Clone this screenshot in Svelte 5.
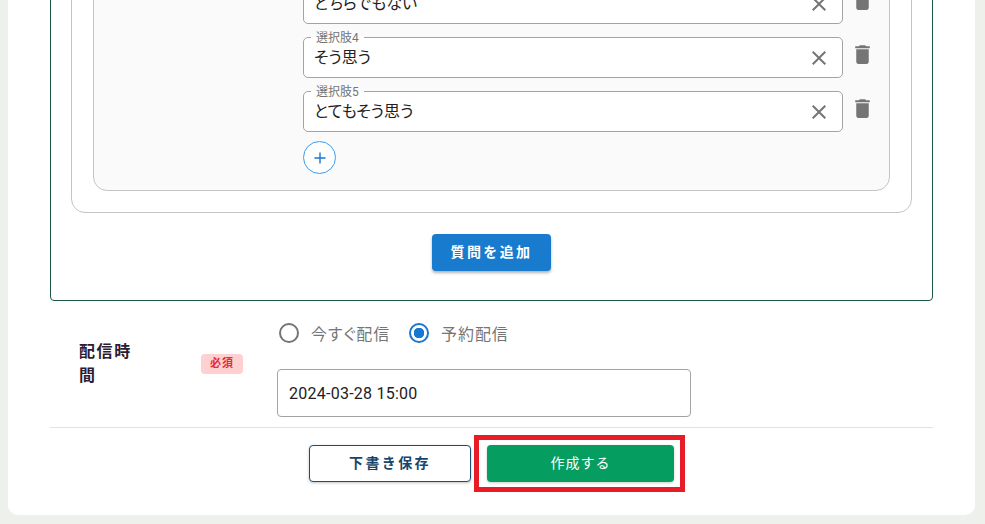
<script lang="ts">
  const choices = [
    { label: '選択肢3', value: 'どちらでもない' },
    { label: '選択肢4', value: 'そう思う' },
    { label: '選択肢5', value: 'とてもそう思う' }
  ];
  let timing = $state('reserve');
</script>

<div class="page">
  <main class="card">
    <section class="form-box">
      <div class="question">
        <div class="choices">
          {#each choices as c}
            <div class="choice-row">
              <fieldset class="field">
                <legend>{c.label}</legend>
                <input type="text" value={c.value} />
                <button class="clear" type="button" aria-label="クリア">
                  <svg viewBox="0 0 24 24" width="24" height="24"><path d="M19 6.41 17.59 5 12 10.59 6.41 5 5 6.41 10.59 12 5 17.59 6.41 19 12 13.41 17.59 19 19 17.59 13.41 12z" /></svg>
                </button>
              </fieldset>
              <button class="trash" type="button" aria-label="削除">
                <svg viewBox="0 0 24 24" width="25" height="25"><path d="M6 19c0 1.1.9 2 2 2h8c1.1 0 2-.9 2-2V7H6v12zM19 4h-3.5l-1-1h-5l-1 1H5v2h14V4z" /></svg>
              </button>
            </div>
          {/each}
          <button class="add-choice" type="button" aria-label="選択肢を追加">
            <svg viewBox="0 0 16 16" width="16" height="16"><path d="M8 2.5v11M2.5 8h11" /></svg>
          </button>
        </div>
      </div>
      <div class="add-question-wrap">
        <button class="add-question" type="button">質問を追加</button>
      </div>
    </section>

    <section class="schedule">
      <div class="schedule-label">
        <h3>配信時間</h3>
        <span class="badge">必須</span>
      </div>
      <div class="schedule-body">
        <div class="radios">
          <label class="radio">
            <input type="radio" bind:group={timing} value="now" />
            <span class="dot"></span>
            <span>今すぐ配信</span>
          </label>
          <label class="radio">
            <input type="radio" bind:group={timing} value="reserve" />
            <span class="dot"></span>
            <span>予約配信</span>
          </label>
        </div>
        <input class="datetime" type="text" value="2024-03-28 15:00" />
      </div>
    </section>

    <footer class="actions">
      <button class="draft" type="button">下書き保存</button>
      <div class="highlight">
        <button class="create" type="button">作成する</button>
      </div>
    </footer>
  </main>
</div>

<style>
  :global(body) {
    margin: 0;
    background: #eef0ec;
  }

  .page {
    height: 524px;
    overflow: hidden;
    display: flex;
    flex-direction: column;
    justify-content: flex-end;
    padding: 0 10px 9px 8px;
    box-sizing: border-box;
    font-family: Roboto, "Noto Sans CJK JP", sans-serif;
    color: #212121;
  }

  button {
    font-family: inherit;
    cursor: pointer;
  }

  .card {
    flex-shrink: 0;
    background: #fff;
    border-radius: 10px;
    padding: 24px 42px 33px;
  }

  .form-box {
    border: 1px solid #1c5a48;
    border-radius: 4px;
    padding: 20px 20px 29px;
  }

  .question {
    border: 1px solid #c4c4c4;
    border-radius: 14px;
    padding: 20px 21px 21px;
  }

  .choices {
    background: #fafafa;
    border: 1px solid #c4c4c4;
    border-radius: 14px;
    padding: 20px 0 16px 209px;
  }

  .choice-row {
    display: flex;
    align-items: flex-start;
    margin-bottom: 6px;
  }

  .field {
    position: relative;
    flex: none;
    width: 540px;
    box-sizing: border-box;
    height: 48px;
    margin: 0;
    padding: 0 0 0 7px;
    background: #fff;
    border: 1px solid #a3a3a3;
    border-radius: 5px;
  }

  legend {
    padding: 2px 5px 0;
    font-size: 12px;
    line-height: 12px;
    color: #757575;
  }

  .field input {
    display: block;
    width: 480px;
    border: 0;
    outline: 0;
    background: none;
    padding: 0 3px;
    height: 24px;
    font: inherit;
    font-size: 16px;
    font-feature-settings: "palt";
    color: #212121;
  }

  .clear {
    position: absolute;
    right: 11px;
    top: 2px;
    padding: 0;
    border: 0;
    background: none;
    display: flex;
  }

  .clear svg {
    fill: #757575;
  }

  .trash {
    flex: none;
    margin: 12px 0 0 7px;
    padding: 0;
    border: 0;
    background: none;
    display: flex;
  }

  .trash svg {
    fill: #757575;
  }

  .add-choice {
    width: 33px;
    height: 33px;
    margin-top: 9px;
    padding: 0;
    border: 1px solid #3d9be9;
    border-radius: 50%;
    background: #fff;
    display: flex;
    align-items: center;
    justify-content: center;
  }

  .add-choice svg path {
    stroke: #1976d2;
    stroke-width: 1.4;
    fill: none;
  }

  .add-question-wrap {
    display: flex;
    justify-content: center;
    margin-top: 21px;
  }

  .add-question {
    width: 119px;
    height: 37px;
    border: 0;
    border-radius: 4px;
    padding: 0 0 3px;
    background: #187bcd;
    color: #fff;
    font-size: 14px;
    font-weight: 700;
    letter-spacing: 2.4px;
    box-shadow: 0 2px 3px rgba(0, 0, 0, 0.3);
  }

  .schedule {
    display: flex;
    padding: 17px 0 10px;
    border-bottom: 1px solid #e2e2e2;
  }

  .schedule-label {
    flex: none;
    width: 193px;
    box-sizing: border-box;
    padding: 22px 0 0 29px;
    margin-right: 5px;
    display: flex;
    align-items: flex-start;
    justify-content: space-between;
  }

  h3 {
    width: 66px;
    margin: 0;
    font-size: 16px;
    line-height: 24px;
    font-weight: 700;
    letter-spacing: 1.6px;
    color: #2e1c33;
  }

  .badge {
    margin-top: 14px;
    width: 42px;
    height: 20px;
    border-radius: 4px;
    background: #ffd0d0;
    color: #e8283c;
    font-size: 11px;
    font-weight: 700;
    line-height: 20px;
    text-align: center;
    letter-spacing: 1px;
    box-sizing: border-box;
  }

  .schedule-body {
    padding-left: 29px;
  }

  .radios {
    display: flex;
    gap: 19px;
    height: 30px;
    margin-bottom: 21px;
    padding-left: 2px;
  }

  .radio {
    display: flex;
    align-items: center;
    gap: 12px;
    font-size: 16px;
    letter-spacing: 0.9px;
    font-feature-settings: "palt";
    color: #757575;
    white-space: nowrap;
  }

  .radio input {
    position: absolute;
    opacity: 0;
    width: 0;
    height: 0;
  }

  .dot {
    width: 20px;
    height: 20px;
    box-sizing: border-box;
    border: 2px solid #757575;
    border-radius: 50%;
    background: #fff;
  }

  .radio input:checked + .dot {
    border-color: #1976d2;
    background: radial-gradient(circle, #1976d2 0 5px, #fff 5.5px);
  }

  .datetime {
    display: block;
    width: 414px;
    height: 48px;
    box-sizing: border-box;
    border: 1px solid #a3a3a3;
    border-radius: 4px;
    padding: 0 11px;
    font: inherit;
    font-size: 16px;
    letter-spacing: 0.25px;
    color: #212121;
    outline: 0;
  }

  .actions {
    display: flex;
    justify-content: center;
    gap: 16px;
    padding: 17px 0 0 0;
  }

  .draft {
    width: 162px;
    height: 37px;
    padding: 0 0 3px;
    background: #fff;
    border: 1px solid #1c4e72;
    border-radius: 4px;
    color: #18456b;
    font-size: 14px;
    font-weight: 700;
    letter-spacing: 2.4px;
    box-shadow: 0 1px 3px rgba(0, 0, 0, 0.25);
  }

  .highlight {
    position: relative;
  }

  .highlight::after {
    content: '';
    position: absolute;
    inset: -10px -11px -10px -13px;
    border: 5px solid #e81c27;
    pointer-events: none;
  }

  .create {
    display: block;
    width: 187px;
    height: 37px;
    padding: 0 0 3px;
    border: 0;
    border-radius: 4px;
    background: #069e60;
    color: #fff;
    font-size: 14px;
    letter-spacing: 1px;
    box-shadow: 0 1px 3px rgba(0, 0, 0, 0.2);
  }
</style>
